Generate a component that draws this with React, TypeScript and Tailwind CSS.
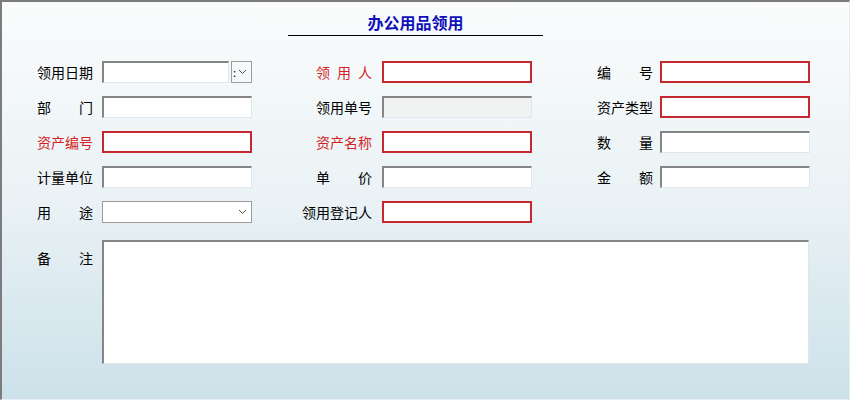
import React from "react";

const FONT = { fontFamily: '"Noto Sans CJK SC", "Noto Sans", sans-serif' };

type Kind = "inset" | "red" | "readonly" | "select" | "date";

function Chevron() {
  return (
    <svg width="9" height="6" viewBox="0 0 9 6" className="shrink-0">
      <path d="M1 1 L4.5 4.5 L8 1" fill="none" stroke="#505050" strokeWidth="1" />
    </svg>
  );
}

function Label({ text, red, wide }: { text: string; red?: boolean; wide?: boolean }) {
  const chars = text.split("");
  return (
    <div
      className={`flex justify-between text-[14px] leading-[22px] shrink-0 ${wide ? "w-[70px]" : "w-[56px]"} ${
        red ? "text-[#d21f26]" : "text-black"
      }`}
    >
      {chars.map((c, i) => (
        <span key={i}>{c}</span>
      ))}
    </div>
  );
}

function Box({ kind }: { kind: Kind }) {
  if (kind === "red") {
    return <div className="w-[150px] h-[22px] bg-white border-2 border-[#c5282e]" />;
  }
  if (kind === "readonly") {
    return (
      <div className="w-[150px] h-[22px] bg-[#f1f2f2] border-t-2 border-l-2 border-t-[#858585] border-l-[#858585] border-b border-r border-b-[#e0e6ea] border-r-[#e0e6ea]" />
    );
  }
  if (kind === "select") {
    return (
      <div className="w-[150px] h-[22px] bg-white border border-[#9c9c9c] flex items-center justify-end pr-[4px]">
        <Chevron />
      </div>
    );
  }
  if (kind === "date") {
    return (
      <div className="w-[150px] h-[22px] flex gap-[2px]">
        <div className="w-[127px] h-[22px] bg-white border-t-2 border-l-2 border-t-[#858585] border-l-[#858585] border-b border-r border-b-[#e0e6ea] border-r-[#e0e6ea]" />
        <div className="w-[21px] h-[22px] border border-[#9c9c9c] flex items-center">
          <span className="text-[11px] leading-none text-black ml-[1px]">:</span>
          <div className="ml-[2px]">
            <Chevron />
          </div>
        </div>
      </div>
    );
  }
  return (
    <div className="w-[150px] h-[22px] bg-white border-t-2 border-l-2 border-t-[#858585] border-l-[#858585] border-b border-r border-b-[#e0e6ea] border-r-[#e0e6ea]" />
  );
}

type Field = { label: string; red?: boolean; kind: Kind; wide?: boolean };

const rows: Field[][] = [
  [
    { label: "领用日期", kind: "date" },
    { label: "领用人", red: true, kind: "red" },
    { label: "编号", kind: "red" },
  ],
  [
    { label: "部门", kind: "inset" },
    { label: "领用单号", kind: "readonly" },
    { label: "资产类型", kind: "red" },
  ],
  [
    { label: "资产编号", red: true, kind: "red" },
    { label: "资产名称", red: true, kind: "red" },
    { label: "数量", kind: "inset" },
  ],
  [
    { label: "计量单位", kind: "inset" },
    { label: "单价", kind: "inset" },
    { label: "金额", kind: "inset" },
  ],
  [
    { label: "用途", kind: "select" },
    { label: "领用登记人", kind: "red", wide: true },
  ],
];

const gaps = ["gap-[9px]", "gap-[10px]", "gap-[7px]"];

export default function App() {
  return (
    <div
      style={FONT}
      className="w-[850px] h-[400px] bg-gradient-to-b from-[#fafcfc] via-[#eaf2f5] to-[#cce1ea] border-t-2 border-l-2 border-t-[#7c7c7c] border-l-[#7c7c7c] border-r border-b border-r-[#e6eef2] border-b-[#e6eef2] overflow-hidden"
    >
      <div className="ml-[286px] w-[255px] pt-[8px] border-b border-black text-center">
        <h1 className="text-[16px] leading-[25px] font-bold text-[#1010b8]">办公用品领用</h1>
      </div>

      <div className="pl-[35px] pt-[25px] flex flex-col gap-[13px]">
        {rows.map((row, ri) => (
          <div key={ri} className="grid grid-cols-[215px_280px_278px]">
            {row.map((f, ci) => (
              <div key={ci} className={`flex items-center justify-end ${gaps[ci]}`}>
                <Label text={f.label} red={f.red} wide={f.wide} />
                <Box kind={f.kind} />
              </div>
            ))}
          </div>
        ))}
      </div>

      <div className="pl-[35px] pt-[17px] flex gap-[9px]">
        <div className="pt-[7px]">
          <Label text="备注" />
        </div>
        <div className="w-[707px] h-[124px] bg-white border-t-2 border-l-2 border-t-[#858585] border-l-[#858585] border-b border-r border-b-[#e0e6ea] border-r-[#e0e6ea]" />
      </div>
    </div>
  );
}
